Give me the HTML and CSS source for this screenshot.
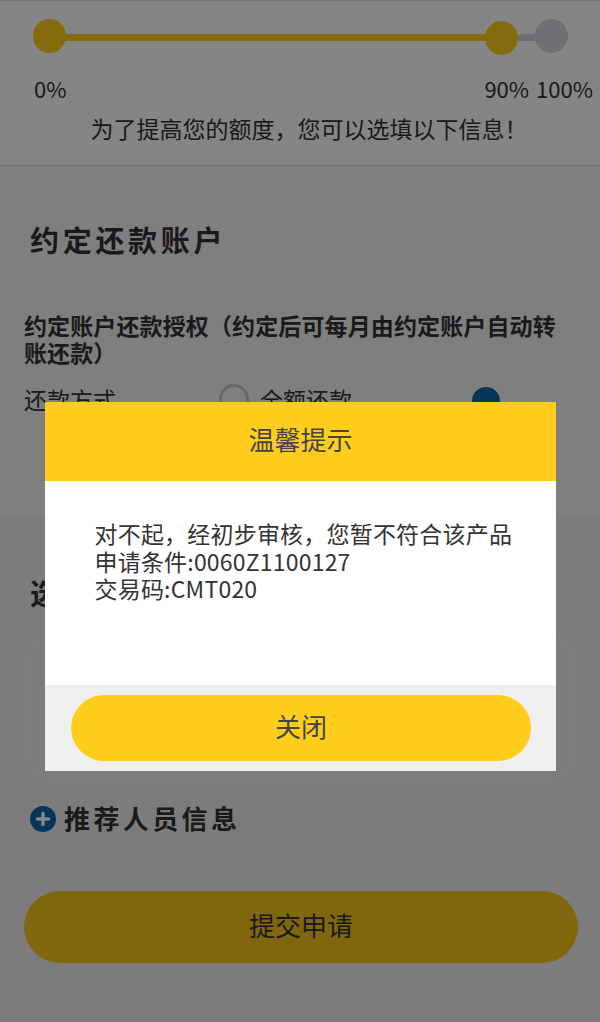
FILE: index.html
```html
<!DOCTYPE html>
<html lang="zh">
<head>
<meta charset="utf-8">
<title>温馨提示</title>
<link rel="stylesheet" href="styles.css">
</head>
<body>
<main class="page">
  <section class="progress">
    <div class="track">
      <span class="dot dot-on"></span>
      <span class="line line-on"></span>
      <span class="dot dot-on dot-mid"></span>
      <span class="line line-off"></span>
      <span class="dot dot-off"></span>
    </div>
    <div class="marks"><span>0%</span><span class="marks-right"><span>90%</span><span>100%</span></span></div>
    <p class="hint">为了提高您的额度，您可以选填以下信息！</p>
  </section>
  <section class="account">
    <h2 class="title">约定还款账户</h2>
    <p class="auth">约定账户还款授权（约定后可每月由约定账户自动转账还款）</p>
    <div class="method">
      <span class="method-label">还款方式</span>
      <span class="radio"></span>
      <span class="method-value">全额还款</span>
      <span class="radio radio-on"></span>
    </div>
  </section>
  <section class="choose">
    <h2 class="title">选择</h2>
    <div class="card"></div>
    <div class="referrer">
      <svg class="plus" viewBox="0 0 26 26" aria-hidden="true"><circle cx="13" cy="13" r="13" fill="#0a68ab"/><path d="M13 7.5v11M7.5 13h11" stroke="#fff" stroke-width="3.4" stroke-linecap="round"/></svg>
      <span>推荐人员信息</span>
    </div>
    <button class="submit" type="button">提交申请</button>
  </section>
</main>
<div class="overlay"></div>
<div class="dialog">
  <header class="dialog-head">温馨提示</header>
  <div class="dialog-body">
    <p>对不起，经初步审核，您暂不符合该产品</p>
    <p>申请条件:0060Z1100127</p>
    <p>交易码:CMT020</p>
  </div>
  <footer class="dialog-foot"><button class="close" type="button">关闭</button></footer>
</div>
</body>
</html>
```
FILE: styles.css
```css
* { box-sizing: border-box; }
html, body { margin: 0; height: 1022px; overflow: hidden; }
body {
  position: relative;
  background: #eeeeee;
  color: #333;
  font-family: "Noto Sans CJK SC", "Noto Sans", sans-serif;
}
p, h2 { margin: 0; }
.progress {
  height: 166px;
  padding: 18px 7px 0 33px;
  background: #fff;
  border-bottom: 1px solid #d5d5d5;
  border-top: 1px solid #e2e2e2;
}
.track { display: flex; align-items: flex-start; height: 36px; padding-right: 25px; }
.dot { flex: none; width: 33px; height: 34px; border-radius: 50%; }
.dot-on { background: #ffce1c; }
.dot-mid { margin-top: 2px; }
.dot-off { background: #d5d6dc; }
.line { height: 7px; margin-top: 15px; }
.line-on { flex: 1; background: #ffce1c; margin-left: -1px; margin-right: -1px; }
.line-off { width: 17px; background: #d5d6dc; }
.marks {
  display: flex;
  justify-content: space-between;
  margin: 17px 0 0 1px;
  font-size: 22px;
  line-height: 32px;
}
.marks-right { display: flex; gap: 7px; }
.hint {
  margin: 8px 0 0 -33px;
  width: 600px;
  padding-left: 18px;
  font-size: 23px;
  line-height: 32px;
  text-align: center;
}
.account {
  height: 351px;
  padding: 49px 24px 0;
  background: #f3f3f3;
  border-bottom: 1px solid #e8e8e8;
}
.title {
  padding-left: 6px;
  font-size: 29px;
  line-height: 48px;
  letter-spacing: 3.7px;
  font-weight: 700;
}
.auth {
  margin-top: 49px;
  font-size: 23px;
  line-height: 27px;
  letter-spacing: 0.12px;
  font-weight: 700;
  width: 540px;
}
.method { display: flex; align-items: center; margin-top: 16px; font-size: 23px; line-height: 34px; }
.method-label { width: 195px; }
.radio { flex: none; width: 30px; height: 30px; border-radius: 50%; border: 3px solid #c8c8c8; }
.method-value { width: 212px; margin-left: 11px; }
.radio-on { width: 28px; height: 28px; margin-top: 4px; background: #0a68ab; border-color: #0a68ab; }
.choose { padding: 50px 24px 0; }
.choose .title { line-height: 50px; }
.card {
  margin: 18px 4px 0 6px;
  height: 144px;
  background: #eeeeee;
  border: 2px solid #f2f2f2;
  border-radius: 22px;
}
.referrer {
  display: flex;
  align-items: center;
  gap: 8px;
  margin: 20px 0 0 6px;
  height: 36px;
  font-size: 26px;
  letter-spacing: 3.4px;
  font-weight: 700;
}
.plus { width: 26px; height: 26px; flex: none; margin-top: 3px; }
.submit {
  display: block;
  width: 554px;
  height: 72px;
  margin-top: 56px;
  padding: 0 0 5px;
  border: 0;
  border-radius: 36px;
  background: #f6c31a;
  color: #333;
  font: inherit;
  font-size: 26px;
  font-weight: 400;
}
.overlay { position: absolute; inset: 0; background: rgba(0, 0, 0, 0.48); }
.dialog {
  position: absolute;
  left: 45px;
  top: 402px;
  width: 511px;
  height: 369px;
  display: flex;
  flex-direction: column;
  background: #fff;
}
.dialog-head {
  height: 79px;
  background: #ffce1c;
  font-size: 26px;
  line-height: 74px;
  text-align: center;
  color: #444;
}
.dialog-body {
  flex: 1;
  padding: 39px 40px 0 49.5px;
  font-size: 23px;
  line-height: 27.5px;
  letter-spacing: 0.2px;
  color: #333;
}
.dialog-foot { height: 86px; padding: 10px 25px 0 26px; background: #efefef; }
.close {
  display: block;
  width: 100%;
  height: 66px;
  padding: 0 0 5px;
  border: 0;
  border-radius: 33px;
  background: #ffce1c;
  color: #444;
  font: inherit;
  font-size: 26px;
}
```
